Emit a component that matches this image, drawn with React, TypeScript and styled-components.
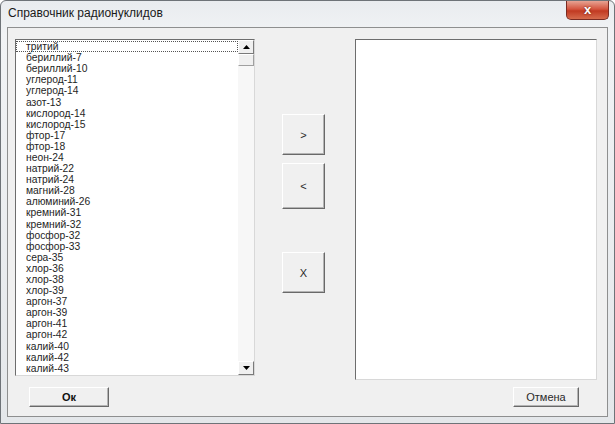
import styled, { createGlobalStyle } from "styled-components";

const GlobalStyle = createGlobalStyle`
  html, body {
    margin: 0;
    padding: 0;
    background: #ffffff;
  }
  * {
    box-sizing: border-box;
  }
`;

const nuclides = [
  "тритий",
  "бериллий-7",
  "бериллий-10",
  "углерод-11",
  "углерод-14",
  "азот-13",
  "кислород-14",
  "кислород-15",
  "фтор-17",
  "фтор-18",
  "неон-24",
  "натрий-22",
  "натрий-24",
  "магний-28",
  "алюминий-26",
  "кремний-31",
  "кремний-32",
  "фосфор-32",
  "фосфор-33",
  "сера-35",
  "хлор-36",
  "хлор-38",
  "хлор-39",
  "аргон-37",
  "аргон-39",
  "аргон-41",
  "аргон-42",
  "калий-40",
  "калий-42",
  "калий-43",
];

const Window = styled.div`
  width: 615px;
  height: 424px;
  display: flex;
  flex-direction: column;
  padding: 0 6px 6px 6px;
  background: linear-gradient(180deg, #e9ecef 0%, #f1f3f5 8%, #e4e7ea 100%);
  border: 1px solid #6e7378;
  border-radius: 6px 6px 0 0;
  font-family: "Liberation Sans", Arial, sans-serif;
  overflow: hidden;
`;

const TitleBar = styled.div`
  height: 26px;
  flex: none;
  display: flex;
  align-items: center;
  justify-content: space-between;
`;

const Title = styled.span`
  font-family: "Liberation Sans", Arial, sans-serif;
  font-size: 12px;
  color: #1a1a1a;
  padding-left: 1px;
  margin-top: -2px;
`;

const CloseButton = styled.div`
  width: 43px;
  height: 19px;
  margin-top: -8px;
  margin-right: -1px;
  display: flex;
  align-items: center;
  justify-content: center;
  border: 1px solid #7a2b22;
  border-top: none;
  border-radius: 0 0 5px 5px;
  background: linear-gradient(180deg, #e7a393 0%, #d4553f 45%, #c13a22 55%, #d66b4d 100%);
  color: #ffffff;
  font-size: 13px;
  font-weight: bold;
  text-shadow: 0 0 2px #5a1408;
`;

const Client = styled.div`
  flex: 1;
  display: flex;
  flex-direction: column;
  background: #f0f0f0;
  border: 1px solid #8e8f8f;
  padding: 11px 10px 9px 7px;
`;

const MainRow = styled.div`
  display: flex;
  align-items: flex-start;
`;

const ListBox = styled.div<{ $w: number; $h: number }>`
  width: ${({ $w }) => $w}px;
  height: ${({ $h }) => $h}px;
  flex: none;
  display: flex;
  background: #ffffff;
  border-top: 1px solid #6d6d6d;
  border-left: 1px solid #6d6d6d;
  border-right: 1px solid #d8d8d8;
  border-bottom: 1px solid #d8d8d8;
  overflow: hidden;
`;

const Items = styled.div`
  flex: 1;
  display: flex;
  flex-direction: column;
  padding-top: 1px;
  overflow: hidden;
`;

const Item = styled.div<{ $focused?: boolean }>`
  height: 11.1px;
  flex: none;
  line-height: 11px;
  font-size: 10.3px;
  color: #1e1e1e;
  padding-left: 9px;
  border: 1px dotted ${({ $focused }) => ($focused ? "#555" : "transparent")};
  display: flex;
  align-items: center;
  white-space: nowrap;
`;

const ScrollBar = styled.div`
  width: 16px;
  flex: none;
  display: flex;
  flex-direction: column;
  background: #f3f3f3;
`;

const ScrollArrow = styled.div`
  height: 14px;
  flex: none;
  display: flex;
  align-items: center;
  justify-content: center;
  background: #f0f0f0;
  border-top: 1px solid #ffffff;
  border-left: 1px solid #ffffff;
  border-right: 1px solid #7a7a7a;
  border-bottom: 1px solid #7a7a7a;
`;

const Thumb = styled.div`
  height: 12px;
  flex: none;
  background: #f0f0f0;
  border-top: 1px solid #ffffff;
  border-left: 1px solid #ffffff;
  border-right: 1px solid #a0a0a0;
  border-bottom: 1px solid #a0a0a0;
`;

const Track = styled.div`
  flex: 1;
  background: #f7f7f7;
`;

const ButtonColumn = styled.div`
  width: 100px;
  flex: none;
  display: flex;
  flex-direction: column;
  align-items: center;
  padding-top: 75px;
  padding-right: 3px;
`;

const Button = styled.button<{ $w: number; $h: number; $gap?: number }>`
  width: ${({ $w }) => $w}px;
  height: ${({ $h }) => $h}px;
  margin-top: ${({ $gap }) => $gap ?? 0}px;
  flex: none;
  padding: 0;
  background: #f0f0f0;
  border-top: 1px solid #ffffff;
  border-left: 1px solid #ffffff;
  border-right: 1px solid #696969;
  border-bottom: 1px solid #696969;
  box-shadow: inset -1px -1px 0 #b4b4b4;
  font-family: "Liberation Sans", Arial, sans-serif;
  font-size: 11px;
  color: #2a2a2a;
`;

const BoldButton = styled(Button)`
  font-weight: bold;
  color: #111;
`;

const BottomRow = styled.div`
  display: flex;
  justify-content: space-between;
  align-items: center;
  margin-top: auto;
  padding: 0 18px 0 14px;
`;

function ArrowUp() {
  return (
    <svg width="7" height="4" viewBox="0 0 7 4">
      <polygon points="0,4 7,4 3.5,0" fill="#000" />
    </svg>
  );
}

function ArrowDown() {
  return (
    <svg width="7" height="4" viewBox="0 0 7 4">
      <polygon points="0,0 7,0 3.5,4" fill="#000" />
    </svg>
  );
}

export default function App() {
  return (
    <>
      <GlobalStyle />
      <Window>
        <TitleBar>
          <Title>Справочник радионуклидов</Title>
          <CloseButton>x</CloseButton>
        </TitleBar>
        <Client>
          <MainRow>
            <ListBox $w={240} $h={337}>
              <Items>
                {nuclides.map((n, i) => (
                  <Item key={n} $focused={i === 0}>
                    {n}
                  </Item>
                ))}
              </Items>
              <ScrollBar>
                <ScrollArrow>
                  <ArrowUp />
                </ScrollArrow>
                <Thumb />
                <Track />
                <ScrollArrow>
                  <ArrowDown />
                </ScrollArrow>
              </ScrollBar>
            </ListBox>
            <ButtonColumn>
              <Button $w={43} $h={41}>&gt;</Button>
              <Button $w={43} $h={46} $gap={8}>&lt;</Button>
              <Button $w={43} $h={41} $gap={43}>X</Button>
            </ButtonColumn>
            <ListBox $w={242} $h={341} />
          </MainRow>
          <BottomRow>
            <BoldButton $w={80} $h={20}>Ок</BoldButton>
            <Button $w={66} $h={20}>Отмена</Button>
          </BottomRow>
        </Client>
      </Window>
    </>
  );
}
